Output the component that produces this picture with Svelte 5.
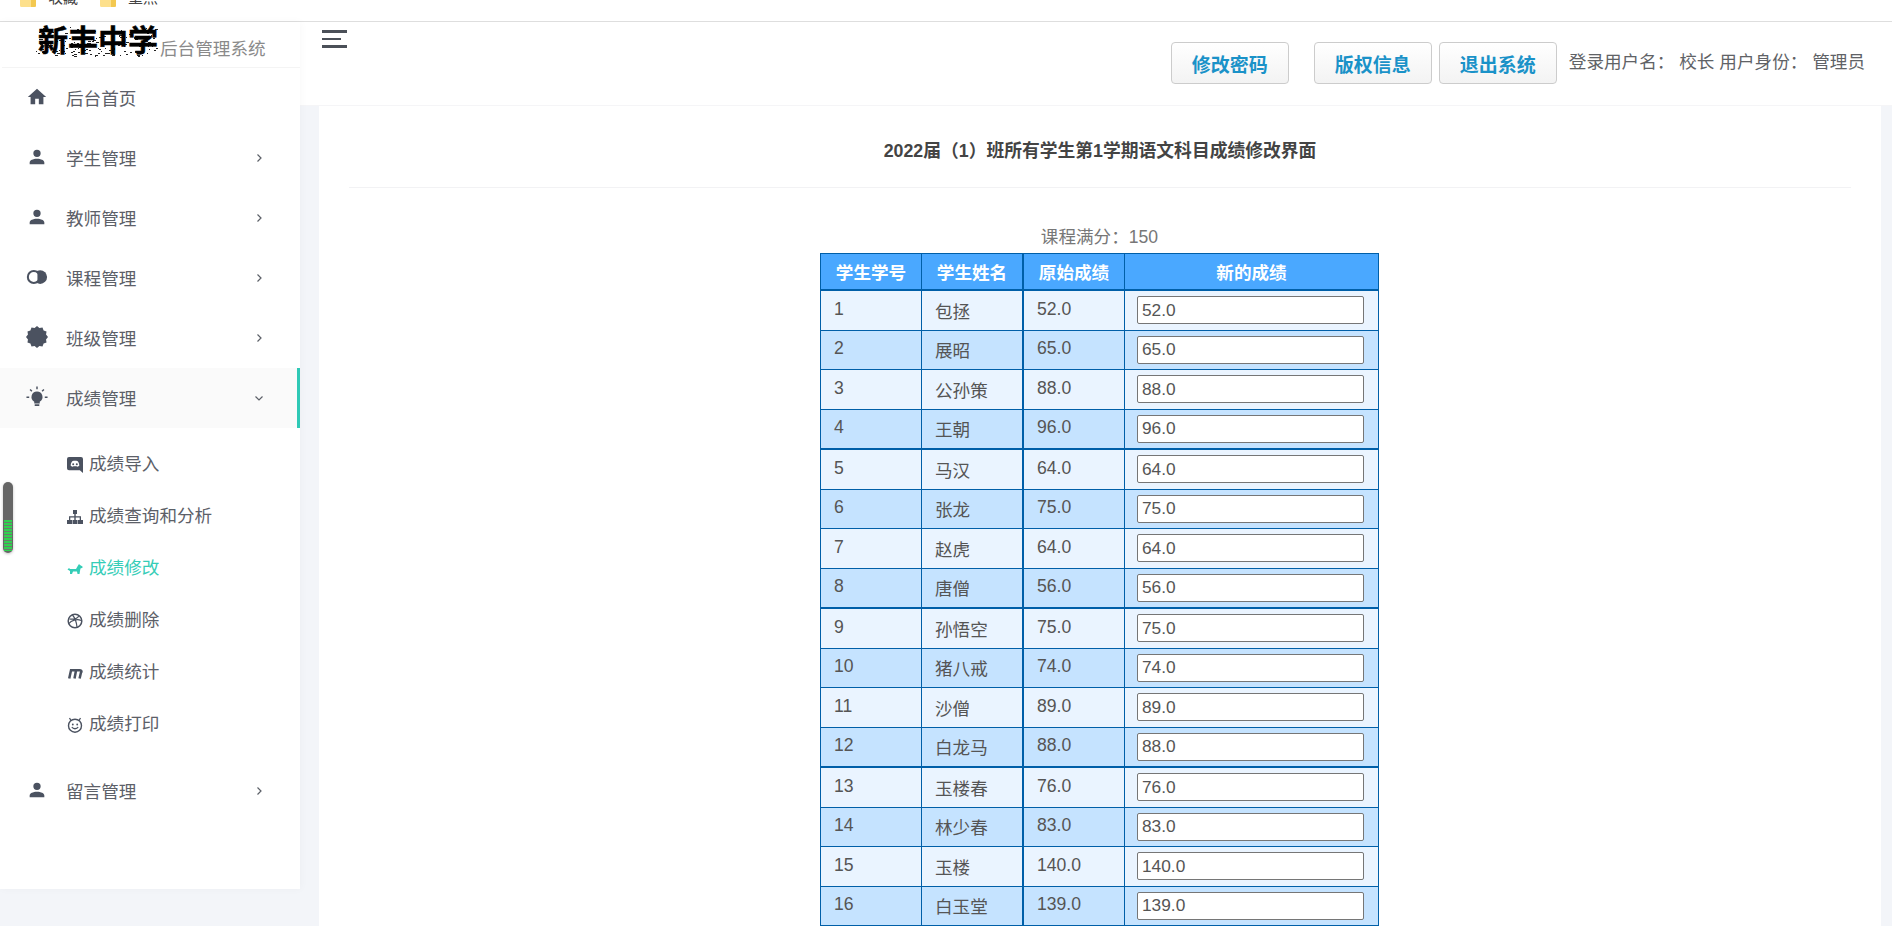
<script>
  const students = [
    [1,'包拯','52.0'],[2,'展昭','65.0'],[3,'公孙策','88.0'],[4,'王朝','96.0'],
    [5,'马汉','64.0'],[6,'张龙','75.0'],[7,'赵虎','64.0'],[8,'唐僧','56.0'],
    [9,'孙悟空','75.0'],[10,'猪八戒','74.0'],[11,'沙僧','89.0'],[12,'白龙马','88.0'],
    [13,'玉楼春','76.0'],[14,'林少春','83.0'],[15,'玉楼','140.0'],[16,'白玉堂','139.0']
  ];
  const person = 'M12 4a4 4 0 1 1 0 8 4 4 0 0 1 0-8zm0 10c4.400 0 8 1.800 8 4v2H4v-2c0-2.200 3.600-4 8-4z';
  const home = 'M10 20v-6h4v6h5v-8h3L12 3 2 12h3v8z';
  const menus = [
    { label: '学生管理', d: person },
    { label: '教师管理', d: person },
    { label: '课程管理', icon: 'circles' },
    { label: '班级管理', icon: 'badge' }
  ];
  const subs = [
    { label: '成绩导入', icon: 'discord' },
    { label: '成绩查询和分析', icon: 'sitemap' },
    { label: '成绩修改', icon: 'dog', active: true },
    { label: '成绩删除', icon: 'dribbble' },
    { label: '成绩统计', icon: 'moz' },
    { label: '成绩打印', icon: 'smile' }
  ];
  const badge = Array.from({ length: 24 }, (_, i) => {
    const a = (i / 24) * Math.PI * 2;
    const r = i % 2 ? 10.2 : 12;
    return `${(12 + r * Math.cos(a)).toFixed(2)},${(12 + r * Math.sin(a)).toFixed(2)}`;
  }).join(' ');
  let seed = 7;
  const rnd = () => (seed = (seed * 16807) % 2147483647) / 2147483647;
  const specks = Array.from({ length: 170 }, () => {
    const low = rnd() < 0.7;
    return {
      x: Math.round(rnd() * 122),
      y: Math.round(low ? 19 + rnd() * 14 : 4 + rnd() * 16),
      w: 1 + Math.round(rnd() * 2)
    };
  });
</script>

<div class="page">
  <div class="favbar">
    <span class="fav"><svg viewBox="0 0 16 7" class="folder"><path d="M0 0h16v5.500a1.500 1.500 0 0 1-1.500 1.500h-13A1.500 1.500 0 0 1 0 5.500z" fill="#fde08c"/><path d="M11 0h5v5.500a1.500 1.500 0 0 1-1.500 1.500H11z" fill="#f3c850"/></svg><span class="favtext">收藏</span></span>
    <span class="fav"><svg viewBox="0 0 16 7" class="folder"><path d="M0 0h16v5.500a1.500 1.500 0 0 1-1.500 1.500h-13A1.500 1.500 0 0 1 0 5.500z" fill="#fde08c"/><path d="M11 0h5v5.500a1.500 1.500 0 0 1-1.500 1.500H11z" fill="#f3c850"/></svg><span class="favtext">重点</span></span>
  </div>
  <div class="shell">
    <aside class="side">
      <div class="sidepanel">
        <div class="logo">
          <span class="brand"><svg class="noise" viewBox="0 0 124 38" width="124" height="38" aria-hidden="true">{#each specks as s}<rect x={s.x} y={s.y} width={s.w} height="1" fill="#222"/>{/each}</svg><span class="brandtext">新丰中学</span></span>
          <span class="subbrand">后台管理系统</span>
        </div>
        <nav class="nav">
          <div class="item">
            <svg class="ico" viewBox="0 0 24 24"><path d={home}/></svg><span>后台首页</span>
          </div>
          {#each menus as m}
            <div class="item">
              <svg class="ico" viewBox="0 0 24 24">
                {#if m.d}<path d={m.d}/>
                {:else if m.icon === 'circles'}
                  <circle cx="15.500" cy="12" r="7.500"/><circle cx="8.500" cy="12" r="6.500" fill="#fff" stroke="#4b5260" stroke-width="2.200"/><path d="M12.500 6.800a6.500 6.500 0 0 1 0 10.400" fill="#4b5260"/>
                {:else}<polygon points={badge}/>
                {/if}
              </svg>
              <span>{m.label}</span>
              <svg class="chev" viewBox="0 0 10 10"><path d="M3.500 1.500L7 5 3.500 8.500" /></svg>
            </div>
          {/each}
          <div class="item open">
            <svg class="ico" viewBox="0 0 24 24"><path d="M12 6a6 6 0 0 0-3 11.200V19h6v-1.800A6 6 0 0 0 12 6zM9.500 20h5v1.800h-5zM11.200 .5h1.600v3h-1.600zM.5 11.500h3v1.500h-3zM20.500 11.500h3v1.500h-3zM3.900 4.300l1.100-1.100 2 2-1.100 1.100zM17 5.200l2-2 1.100 1.100-2 2z"/></svg>
            <span>成绩管理</span>
            <svg class="chev" viewBox="0 0 10 10"><path d="M1.500 3.500L5 7l3.500-3.500" /></svg>
          </div>
          <div class="subs">
            {#each subs as s}
              <div class="sub" class:active={s.active}>
                <svg class="subico" viewBox="0 0 16 16">
                  {#if s.icon === 'discord'}<path d="M2 0h12a2 2 0 0 1 2 2v14l-3.200-2.800H2a2 2 0 0 1-2-2V2a2 2 0 0 1 2-2z"/><path d="M5.200 4.200c2-.6 3.600-.6 5.600 0 .9 1.200 1.500 2.700 1.500 4.600-.8.600-1.600.9-2.400 1l-.6-.8c-1.200.3-1.400.3-2.600 0l-.6.8c-.8-.1-1.600-.4-2.400-1 0-1.900.6-3.400 1.500-4.600z" fill="#fff"/><circle cx="6.200" cy="7.200" r="1"/><circle cx="9.800" cy="7.200" r="1"/>
                  {:else if s.icon === 'sitemap'}<path d="M6 1h4v4H8.700v2.200H14V11h2v4h-5v-4h1.700V8.500H8.700V11H10.500v4h-5v-4h1.800V8.500H3.300V11H5v4H0v-4h2V7.200h5.300V5H6z"/>
                  {:else if s.icon === 'dog'}<path d="M.5 8.500L2 7l1 1h6l2-3.500L12 3l1 1 2.500 1.500v1.300l-2 .7-.5 2.500-.5 3h-2l-.5-2.500H6l-1 2.500H3v-3z"/>
                  {:else if s.icon === 'dribbble'}<circle cx="8" cy="8" r="6.800" fill="none" stroke-width="1.500"/><path d="M2.500 6c4 .5 8 0 9.500-3.500M5.500 2c2.500 3 4 7.500 4.500 12M2 10.500c2-3 8-5 12-3" fill="none" stroke-width="1.200"/>
                  {:else if s.icon === 'moz'}<path d="M2.200 13.500L4.200 4.500M7.500 13.500L9 5.500M12.600 13.500L14.200 6.500M3 5.200H12.500Q15 5.200 14.300 7.500" fill="none" stroke-width="2.500"/>
                  {:else}<circle cx="8" cy="8.700" r="6.500" fill="none" stroke-width="1.400"/><path d="M2.500 1l1.500 2.500M13.500 1L12 3.500M4.800 10c1.500 2.300 4.900 2.300 6.400 0" fill="none" stroke-width="1.300"/><circle cx="5.800" cy="7.500" r=".9"/><circle cx="10.200" cy="7.500" r=".9"/>
                  {/if}
                </svg>
                <span>{s.label}</span>
              </div>
            {/each}
          </div>
          <div class="item">
            <svg class="ico" viewBox="0 0 24 24"><path d={person}/></svg>
            <span>留言管理</span>
            <svg class="chev" viewBox="0 0 10 10"><path d="M3.500 1.500L7 5 3.500 8.500" /></svg>
          </div>
        </nav>
      </div>
      <div class="meter"><div class="meterfill"></div></div>
    </aside>
    <div class="right">
      <header class="top">
        <div class="burger"><i></i><i class="short"></i><i></i></div>
        <div class="actions">
          <button class="btn first">修改密码</button>
          <button class="btn">版权信息</button>
          <button class="btn">退出系统</button>
          <span class="who">登录用户名： 校长 用户身份： 管理员</span>
        </div>
      </header>
      <main class="content">
        <section class="card">
          <h1 class="title">2022届（1）班所有学生第1学期语文科目成绩修改界面</h1>
          <div class="full">课程满分：150</div>
          <table>
            <thead>
              <tr><th class="c1">学生学号</th><th class="c2">学生姓名</th><th class="c3">原始成绩</th><th class="c4">新的成绩</th></tr>
            </thead>
            <tbody>
              {#each students as s}
                <tr>
                  <td>{s[0]}</td><td class="name"><span>{s[1]}</span></td><td>{s[2]}</td>
                  <td class="inp"><input type="text" value={s[2]} /></td>
                </tr>
              {/each}
            </tbody>
          </table>
        </section>
      </main>
    </div>
  </div>
</div>

<style>
  :global(html), :global(body) { margin: 0; height: 100%; overflow: hidden; background: #f3f5f9; }
  .page {
    width: 1892px; height: 926px; overflow: hidden; display: flex; flex-direction: column;
    font-family: "Liberation Sans", "Noto Sans CJK SC", sans-serif; color: #555; font-size: 17.6px;
  }
  .favbar {
    height: 21px; flex: none; background: #fff; border-bottom: 1px solid #dedede; overflow: hidden;
    display: flex; padding-left: 20px;
  }
  .fav { width: 80px; height: 7px; display: flex; flex: none; }
  .folder { width: 16px; height: 7px; flex: none; }
  .favtext { font-size: 15px; line-height: 16px; height: 16px; color: #444; margin: -10px 0 0 12px; white-space: nowrap; }
  .shell { flex: 1; display: flex; min-height: 0; }
  .side { width: 300px; flex: none; position: relative; z-index: 1; }
  .sidepanel { background: #fff; height: 867px; box-shadow: 1px 0 8px rgba(0,0,0,.03); }
  .logo { height: 45px; margin-left: 2px; border-bottom: 1px solid #f4f4f4; position: relative; display: flex; align-items: flex-end; padding-left: 36px; }
  .brand { font-size: 30px; font-weight: 700; color: #000; line-height: 40px; position: relative; top: -6px; }
  .brandtext { position: relative; -webkit-text-stroke: .5px #000; }
  .noise { position: absolute; left: -2px; top: 2px; }
  .subbrand { font-size: 17.6px; color: #8a8a8a; line-height: 24px; position: relative; top: -6px; margin-left: 2px; }
  .nav { display: flex; flex-direction: column; }
  .item {
    height: 60px; display: flex; align-items: center; padding: 0 38px 0 26px; position: relative; color: #5c6068; flex: none;
  }
  .item > span { margin-left: 18px; flex: 1; position: relative; top: -1px; }
  .ico { width: 22px; height: 22px; fill: #4b5260; position: relative; top: -1px; }
  .chev { width: 10px; height: 10px; fill: none; stroke: #5c6068; stroke-width: 1.200; margin-right: -2px; }
  .open { background: #fafafa; border-right: 3px solid #2fc9b6; padding-right: 35px; }
  .subs { padding: 11px 0 10px 67px; }
  .sub { height: 52px; display: flex; align-items: center; gap: 6px; color: #5c6068; }
  .sub > span { position: relative; top: -3px; }
  .sub.active { color: #35cdb7; }
  .sub.active .subico { fill: #35cdb7; }
  .subico { width: 16px; height: 16px; fill: #4b5260; stroke: #4b5260; stroke-width: 0; flex: none; }
  .meter { position: absolute; left: 3px; top: 460px; width: 10px; height: 71px; border-radius: 5px; background: #666; box-shadow: 0 1px 3px rgba(0,0,0,.25); overflow: hidden; }
  .meterfill { position: absolute; left: 1px; right: 1px; top: 38px; height: 31px; background: repeating-linear-gradient(#2fd14f 0 2px, #6b7a6e 2px 3px); }
  .right { flex: 1; min-width: 0; display: flex; flex-direction: column; }
  .top { height: 84px; flex: none; background: #fff; position: relative; display: flex; justify-content: flex-end; border-bottom: 1px solid #f5f5f7; box-sizing: border-box; }
  .burger { position: absolute; left: 22px; top: 8px; width: 25px; display: flex; flex-direction: column; gap: 5px; }
  .burger i { display: block; height: 3px; background: #4b5058; width: 25px; }
  .burger i.short { width: 19px; height: 2px; }
  .actions { display: flex; align-items: flex-start; padding: 20px 27px 0 0; }
  .btn {
    width: 118px; height: 42px; margin-left: 7px; border: 1px solid #ccc; border-radius: 4px; padding: 0;
    background: linear-gradient(#fff, #f3f3f3); color: #1a92c8; font: 700 19px "Liberation Sans", "Noto Sans CJK SC", sans-serif;
  }
  .btn.first { margin-right: 18px; }
  .who { font-size: 17.6px; color: #606266; margin-left: 12px; line-height: 40px; white-space: nowrap; }
  .content { flex: 1; min-height: 0; padding: 0 11px 0 19px; overflow: hidden; }
  .card { background: #fff; height: 900px; padding: 0 31px 0 30px; box-sizing: border-box; }
  .title { margin: 0 -1px 0 0; height: 81px; line-height: 90px; text-align: center; font-size: 17.8px; font-weight: 700; color: #444; border-bottom: 1px solid #f2f2f4; }
  .full { margin-top: 34px; height: 31px; line-height: 31px; text-align: center; color: #777; font-size: 17.6px; }
  table { border-collapse: collapse; width: 559px; margin: 0 auto; table-layout: fixed; font-size: 17.6px; }
  th, td { border: 1px solid #005fa8; padding: 0; }
  th { background: #4aa8ff; color: #fff; font-weight: 700; height: 35px; border-bottom-width: 2px; }
  .c1, .c2, .c3 { width: 100px; }
  .c3 { border-left-width: 2px; }
  td { height: 36.5px; padding-left: 13px; padding-bottom: 2px; }
  tr:nth-child(odd) td { background: #eaf4ff; }
  tr:nth-child(even) td { background: #c5e3ff; }
  tr:nth-child(4n) td { border-bottom-width: 2px; }
  td:nth-child(3) { border-left-width: 2px; }
  td.name span { position: relative; top: 1px; }
  td.inp { padding: 0 14px 0 12px; height: 38.5px; }
  input { display: block; box-sizing: border-box; width: 100%; height: 28px; padding: 0 4px; border: 1px solid #767676; border-radius: 2px; font: 17.3px "Liberation Sans", sans-serif; color: #555; background: #fff; }
</style>
